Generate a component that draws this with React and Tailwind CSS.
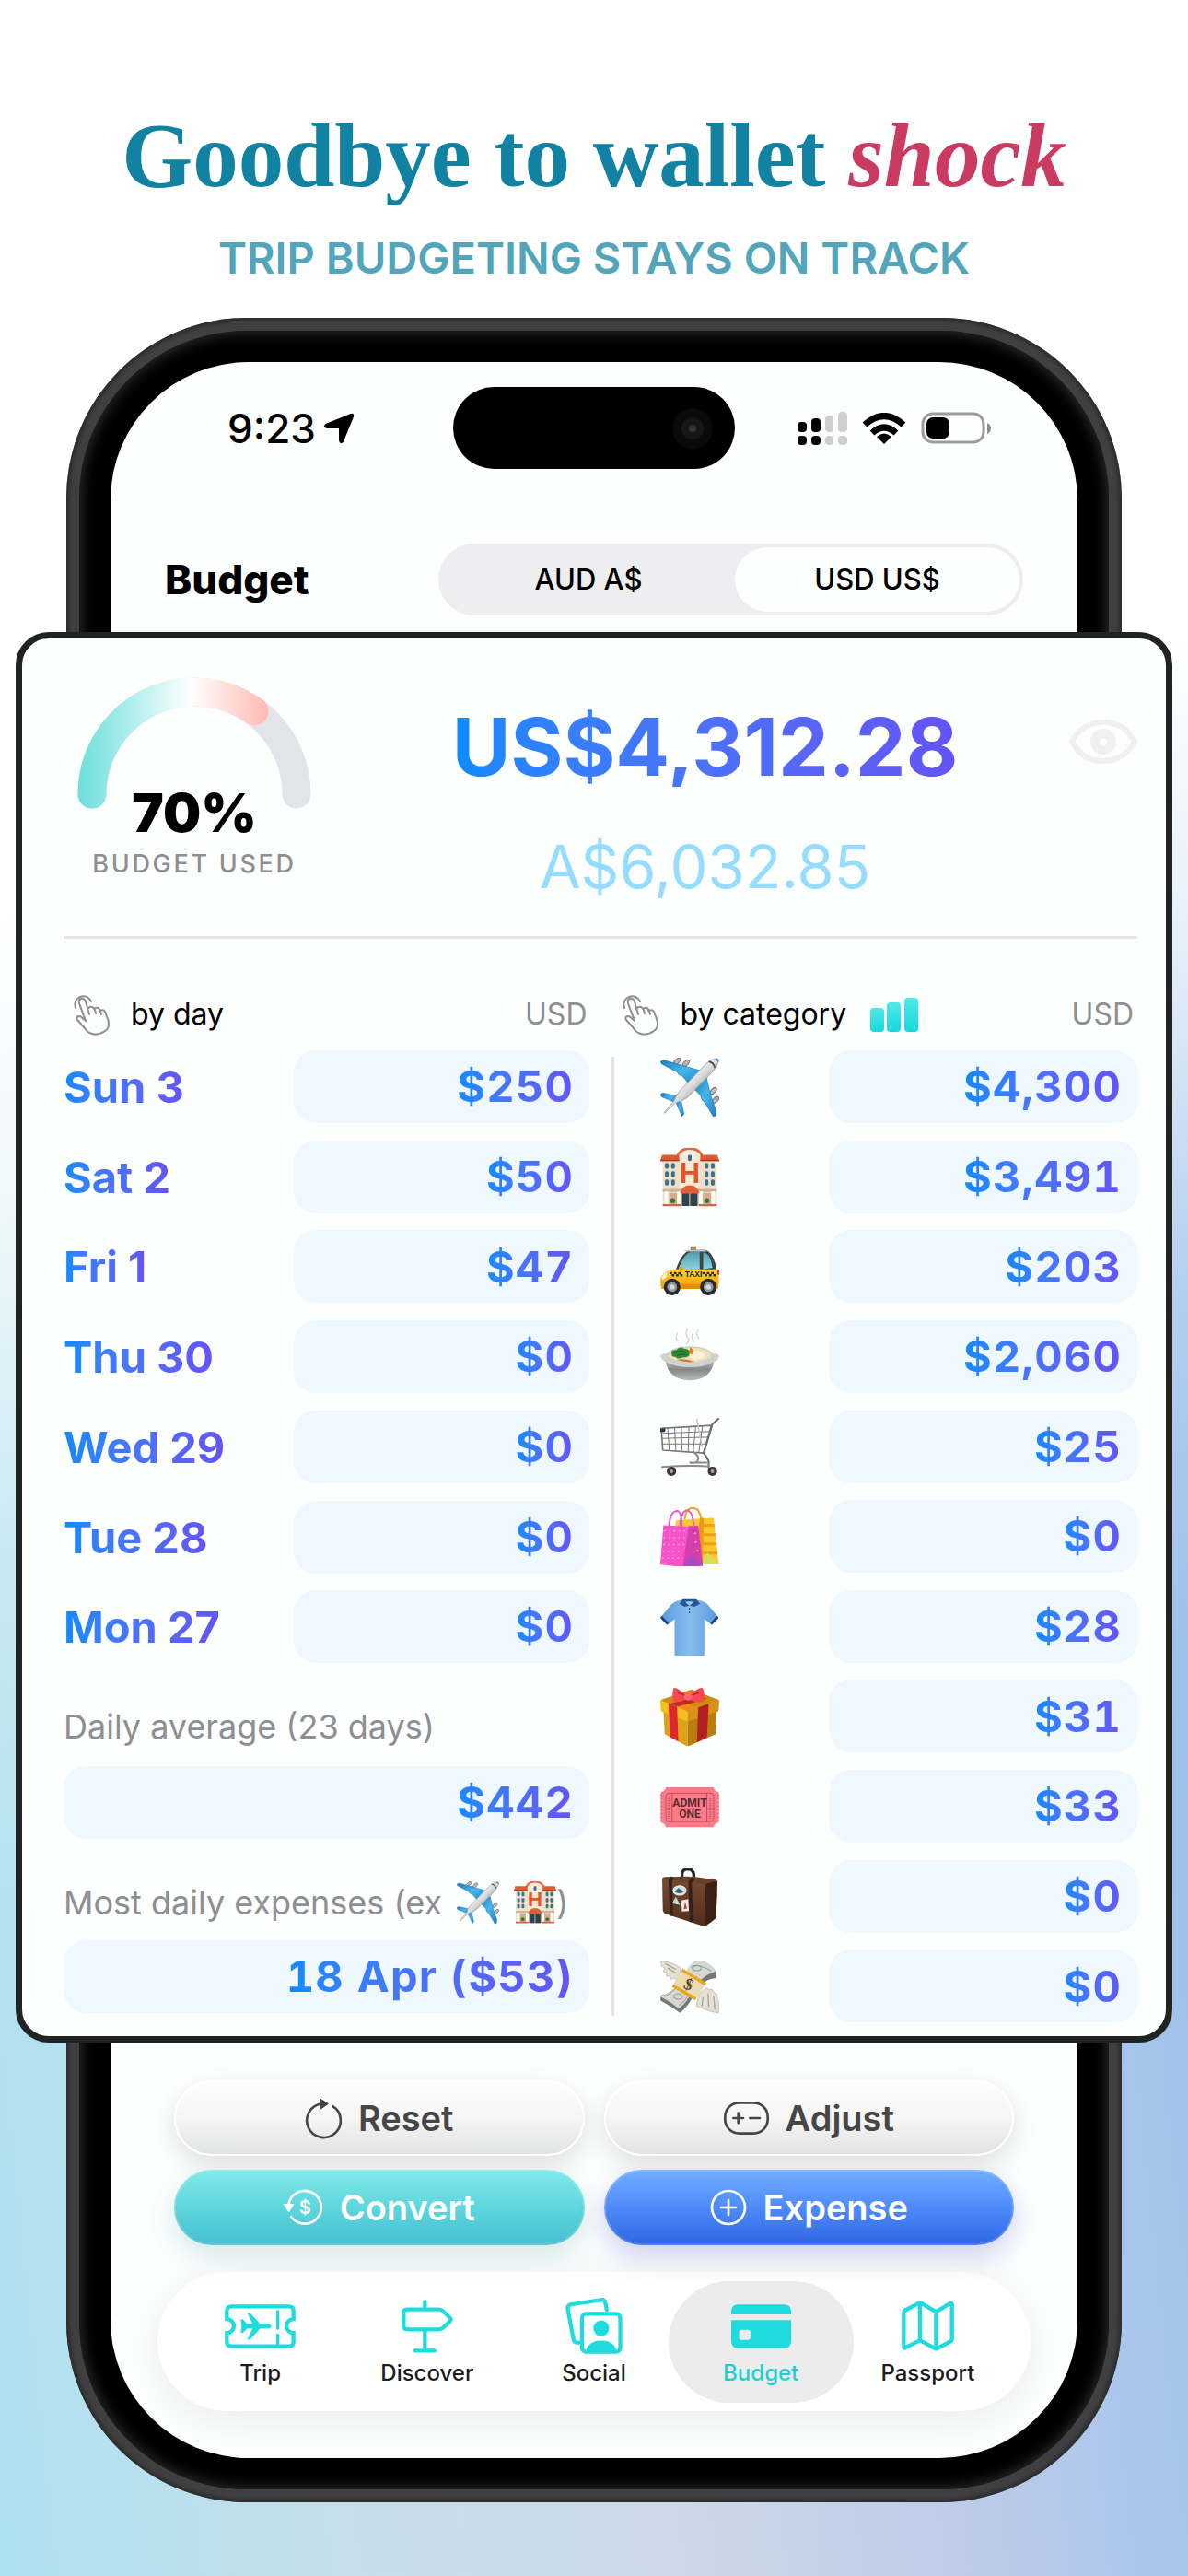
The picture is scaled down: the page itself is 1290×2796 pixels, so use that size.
import React, { useState } from 'react';

const PlaneEmoji = ({ className }) => (
  <svg viewBox="0 0 190 190" className={className} role="img" aria-label="Flights">
    <defs>
      <linearGradient id="planeBody" x1="0" y1="0" x2="1" y2="1">
        <stop offset="0.3" stopColor="#f7f7f7" />
        <stop offset="0.5" stopColor="#dcdcde" />
        <stop offset="0.7" stopColor="#8b8b8f" />
      </linearGradient>
      <linearGradient id="planeWing" x1="0" y1="0" x2="1" y2="1">
        <stop offset="0" stopColor="#1d78b5" />
        <stop offset="0.5" stopColor="#45b8f0" />
        <stop offset="1" stopColor="#1c7fc0" />
      </linearGradient>
    </defs>
    <g fill="#b9b9bb" stroke="#77777a" strokeWidth="3">
      <ellipse cx="54" cy="12" rx="13" ry="7" transform="rotate(-45 54 12)" />
      <ellipse cx="83" cy="18" rx="13" ry="7" transform="rotate(-45 83 18)" />
      <ellipse cx="171" cy="107" rx="13" ry="7" transform="rotate(-45 171 107)" />
      <ellipse cx="178" cy="136" rx="13" ry="7" transform="rotate(-45 178 136)" />
    </g>
    <g fill="url(#planeWing)" stroke="#1f6fa5" strokeWidth="2">
      <path d="M1 12 L12 8 L130 42 L92 84 L70 58 L60 55 L54 46 L4 20Z" />
      <path d="M178 188 L171 190 L143 143 L135 137 L130 122 L106 98 L148 62 L162 120 L180 172Z" />
      <path d="M1 118 L8 114 L62 125 L48 144 L4 126Z" />
      <path d="M52 148 L66 132 L76 182 L70 189Z" />
    </g>
    <path d="M12 177 L45 138 Q50 118 65 104 L145 22 Q168 0 187 3 Q190 22 168 46 L90 126 Q72 141 50 145 L14 179Z" fill="url(#planeBody)" stroke="#8d8d90" strokeWidth="2" />
    <path d="M156 13 Q172 14 176 33" fill="none" stroke="#4c4c50" strokeWidth="5" />
    <path d="M176 3 Q188 0 188 16Z" fill="#2d9fdb" />
  </svg>
);

const HotelEmoji = ({ className }) => (
  <svg viewBox="0 0 190 190" className={className} role="img" aria-label="Hotels">
    <path d="M8 30 H182 V187 H8Z" fill="#f2dfc8" />
    <path d="M62 187 V28 Q64 4 95 3 Q126 4 128 28 V187Z" fill="#f9ead6" />
    <path d="M56 24 Q66 2 95 2 Q124 2 134 24" fill="none" stroke="#e2673e" strokeWidth="8" />
    <path d="M0 42 L6 22 H61 V42Z M129 42 V22 H184 L190 42Z" fill="#dd5a32" />
    <path d="M0 38 H61 V42 H0Z M129 38 H190 V42 H129Z" fill="#a83c20" />
    <rect x="89" y="22" width="12" height="20" rx="5" fill="#356f92" />
    <g fill="#35738f">
      {[48, 75, 102].map((y) =>
        [15, 35, 143, 163].map((x) => <rect key={`${x}-${y}`} x={x} y={y} width="12" height="19" rx="5" />)
      )}
    </g>
    <text x="95" y="113" textAnchor="middle" fontFamily="Liberation Sans" fontWeight="700" fontSize="92" fill="#e2552b">H</text>
    <path d="M8 132 H182 V142 H8Z" fill="#c9b59e" />
    <g fill="#d8a98c">
      <rect x="28" y="145" width="26" height="40" />
      <rect x="137" y="145" width="26" height="40" />
    </g>
    <g fill="#fffdf8">
      <rect x="14" y="140" width="11" height="46" />
      <rect x="54" y="140" width="11" height="46" />
      <rect x="125" y="140" width="11" height="46" />
      <rect x="165" y="140" width="11" height="46" />
    </g>
    <rect x="67" y="142" width="56" height="45" fill="#b59b6a" />
    <path d="M71 146 H92 V187 H71Z M97 146 H119 V187 H97Z" fill="#284457" />
    <path d="M63 146 Q70 120 95 120 Q120 120 127 146Z" fill="#e0603a" />
    <circle cx="40" cy="170" r="8" fill="#2b7a32" />
    <circle cx="150" cy="170" r="8" fill="#2b7a32" />
    <path d="M8 181 H66 V188 H8Z M124 181 H182 V188 H124Z" fill="#cc6a48" />
  </svg>
);

const TaxiEmoji = ({ className }) => (
  <svg viewBox="0 0 190 190" className={className} role="img" aria-label="Taxis">
    <defs>
      <linearGradient id="taxiBody" x1="0" y1="0" x2="0" y2="1">
        <stop offset="0" stopColor="#ffd92e" />
        <stop offset="1" stopColor="#f09a08" />
      </linearGradient>
      <linearGradient id="taxiGlass" x1="0" y1="0" x2="0" y2="1">
        <stop offset="0" stopColor="#4f9fb0" />
        <stop offset="1" stopColor="#8fd3dd" />
      </linearGradient>
    </defs>
    <rect x="97" y="29" width="19" height="14" rx="3" fill="#b98a48" />
    <path d="M48 110 Q70 42 102 40 H142 Q170 44 182 104 V120 H40Z" fill="#3d4447" />
    <path d="M74 44 Q100 38 142 40 L150 46 H84Z" fill="#c8cccd" />
    <path d="M58 104 Q76 50 102 47 H127 V103Z" fill="url(#taxiGlass)" />
    <path d="M138 48 Q162 50 168 98 L138 103Z" fill="url(#taxiGlass)" />
    <path d="M2 128 Q18 104 44 103 H186 Q192 140 186 166 H4 Q-2 148 2 128Z" fill="url(#taxiBody)" />
    <path d="M4 128 Q18 112 22 114 Q24 128 8 138Z" fill="#f9f2e2" />
    <path d="M184 104 H190 V122 L184 118Z" fill="#e0392b" />
    <g fill="#2a2418">
      <path d="M30 112 h8 v7 h-8z M44 112 h8 v7 h-8z M58 112 h8 v7 h-8z M37 119 h8 v7 h-8z M51 119 h8 v7 h-8z M64 119 h8 v7 h-8z" />
      <path d="M136 112 h8 v7 h-8z M150 112 h8 v7 h-8z M164 112 h8 v7 h-8z M143 119 h8 v7 h-8z M157 119 h8 v7 h-8z M171 119 h8 v7 h-8z" />
    </g>
    <rect x="60" y="94" width="15" height="11" rx="4" fill="#f0a818" />
    <text x="107" y="128" textAnchor="middle" fontFamily="Liberation Sans" fontWeight="700" fontSize="25" fill="#211b10">TAXI</text>
    <path d="M66 150 H130 V166 H66Z" fill="#e78c06" />
    {[38, 155].map((x) => (
      <g key={x}>
        <circle cx={x} cy="160" r="27" fill="#26282a" />
        <circle cx={x} cy="160" r="16" fill="#92979b" />
        <circle cx={x} cy="160" r="8" fill="#d9dcde" />
      </g>
    ))}
  </svg>
);

const BowlEmoji = ({ className }) => (
  <svg viewBox="0 0 190 190" className={className} role="img" aria-label="Food">
    <defs>
      <linearGradient id="bowlSide" x1="0" y1="0" x2="0" y2="1">
        <stop offset="0" stopColor="#c4c6c4" />
        <stop offset="0.5" stopColor="#858886" />
        <stop offset="1" stopColor="#b9bbb9" />
      </linearGradient>
    </defs>
    <g fill="none" stroke="#d5d5d5" strokeWidth="4" strokeLinecap="round">
      <path d="M54 18 Q46 32 58 44" />
      <path d="M88 5 Q78 20 90 34 Q96 44 84 52" />
      <path d="M122 8 Q112 20 124 34" />
      <path d="M104 20 Q98 32 108 46" />
    </g>
    <path d="M16 100 Q22 168 95 170 Q168 168 174 100Z" fill="url(#bowlSide)" />
    <path d="M0 92 Q4 82 20 84 Q40 60 95 60 Q150 60 170 84 Q186 82 190 92 Q186 108 168 112 Q140 128 95 128 Q50 128 22 112 Q4 106 0 92Z" fill="#cfd1cf" />
    <ellipse cx="95" cy="88" rx="68" ry="23" fill="#f1dfb5" />
    <path d="M52 104 Q80 98 110 110 Q86 114 52 104Z" fill="#c9783d" />
    <path d="M90 82 Q124 66 142 86 Q150 100 112 104 Q92 100 90 82Z" fill="#f8f1dc" />
    <path d="M96 62 l10 10 l-4 16 l-10 -6z" fill="#ef7a26" />
    <path d="M36 84 Q34 70 52 72 Q62 58 78 68 Q96 68 94 82 Q96 98 74 96 Q56 104 48 94 Q36 96 36 84Z" fill="#2f8a34" />
    <path d="M44 82 Q60 72 84 80 M54 90 Q68 84 84 88" fill="none" stroke="#1d6424" strokeWidth="4" />
  </svg>
);

const CartEmoji = ({ className }) => (
  <svg viewBox="0 0 190 190" className={className} role="img" aria-label="Groceries">
    <g fill="none" stroke="#78787a" strokeWidth="4" strokeLinejoin="round" strokeLinecap="round">
      <path d="M3 34 L165 24 L140 113 L8 104Z" strokeWidth="5" />
      <path d="M4 50 L158 44 M5 66 L154 62 M6 84 L148 84" strokeWidth="3" />
      <path d="M24 34 L29 105 M46 32 L50 106 M68 31 L70 108 M92 30 L90 109 M114 28 L106 110 M136 27 L124 111" strokeWidth="3" />
      <path d="M187 3 L168 20 L140 113 Q152 128 156 140 L156 160" strokeWidth="6" stroke="#6a6a6c" />
      <path d="M108 111 Q128 126 120 138 Q116 148 96 144 H154 M156 156 Q90 152 6 158" strokeWidth="6" stroke="#8b8b8d" />
      <path d="M118 4 L124 38 L134 92" stroke="#c2c2c4" strokeWidth="4" />
    </g>
    <rect x="0" y="34" width="16" height="11" rx="2" fill="#1d3a55" />
    {[36, 168].map((x) => (
      <g key={x}>
        <circle cx={x} cy="172" r="15" fill="#3b3436" />
        <circle cx={x} cy="172" r="6" fill="#a7a1a2" />
      </g>
    ))}
  </svg>
);

const BagsEmoji = ({ className }) => (
  <svg viewBox="0 0 190 190" className={className} role="img" aria-label="Shopping">
    <path d="M78 40 Q84 0 106 2 Q128 4 132 40" fill="none" stroke="#f0a62c" strokeWidth="6" />
    <path d="M50 42 L130 36 L172 34 L188 184 L130 184 L46 100Z" fill="#fbc92c" />
    <path d="M128 34 L140 34 L136 184 L110 184Z" fill="#e39a14" />
    <path d="M130 58 H174 M132 88 H178 M134 118 H182 M136 148 H184" stroke="#f49b1b" strokeWidth="9" />
    <path d="M138 166 L152 146 L188 184 H136Z" fill="#cfe05a" />
    <path d="M10 58 L98 62 L122 60 L137 188 L72 193 L0 184Z" fill="#f653c8" />
    <path d="M92 60 L122 60 L137 188 L72 193Z" fill="#d63fae" />
    <path d="M72 193 L100 150 L137 188Z" fill="#a94bc4" />
    <g fill="#ffb4ea">
      {[76, 98, 120, 142, 164].map((y) =>
        [18, 34, 50, 66, 82].map((x) => (x < 98 - y / 8 ? <circle key={`${x}-${y}`} cx={x - y / 18} cy={y} r="2.5" /> : null))
      )}
      <circle cx="112" cy="84" r="3" />
      <circle cx="114" cy="112" r="3" />
      <circle cx="120" cy="140" r="3" />
    </g>
    <path d="M28 66 Q30 12 56 12 Q68 14 70 66 M64 62 Q66 10 88 10 Q104 14 108 58" fill="none" stroke="#e85fc3" strokeWidth="6" />
  </svg>
);

const ShirtEmoji = ({ className }) => (
  <svg viewBox="0 0 190 190" className={className} role="img" aria-label="Clothes">
    <defs>
      <linearGradient id="shirtBody" x1="0" y1="0" x2="1" y2="0">
        <stop offset="0" stopColor="#5c9ada" />
        <stop offset="0.5" stopColor="#86bdf0" />
        <stop offset="1" stopColor="#5c9ada" />
      </linearGradient>
    </defs>
    <path d="M66 8 Q44 12 34 24 L4 60 L24 86 L46 70 V184 Q46 187 50 187 H138 Q142 187 142 184 V70 L164 86 L184 60 L154 24 Q144 12 122 8Z" fill="url(#shirtBody)" />
    <path d="M4 58 L0 66 L22 88 L27 82Z M184 58 L188 66 L166 88 L161 82Z" fill="#1a4688" />
    <path d="M72 5 H116 L128 20 L110 30 L94 26 L78 30 L62 20Z" fill="#235598" />
    <path d="M80 14 Q94 10 108 14 L94 27Z" fill="#9cc8ee" />
    <circle cx="94" cy="36" r="2.5" fill="#214f8c" />
    <circle cx="94" cy="48" r="2.5" fill="#214f8c" />
  </svg>
);

const GiftEmoji = ({ className }) => (
  <svg viewBox="0 0 190 190" className={className} role="img" aria-label="Gifts">
    <path d="M0 42 L100 8 L190 42 L88 84Z" fill="#cf8c10" />
    <path d="M10 72 L88 100 V192 L14 152Z" fill="#dfa11a" />
    <path d="M88 100 L182 72 L178 152 L88 192Z" fill="#b97d0d" />
    <path d="M0 42 L88 78 V112 L2 78Z" fill="#f6bd1e" />
    <path d="M88 78 L190 42 L188 78 L88 112Z" fill="#d69313" />
    <path d="M60 64 L30 54 L120 30 L150 38Z" fill="#c02a22" />
    <path d="M26 52 L54 64 L58 176 L32 162Z" fill="#dc2a2c" />
    <path d="M122 66 L156 54 L150 164 L118 178Z" fill="#b31f22" />
    <path d="M54 64 L88 54 L122 66 L88 78Z" fill="#ee8b1a" />
    <path d="M88 30 Q46 -6 42 6 Q36 34 42 46 Q60 54 88 36Z M88 30 Q132 -6 138 6 Q146 34 140 46 Q120 56 88 36Z" fill="#f24a4e" />
    <path d="M84 30 L58 18 M94 30 L124 18" stroke="#b92429" strokeWidth="4" />
    <circle cx="90" cy="31" r="13" fill="#ff676a" />
  </svg>
);

const TicketEmoji = ({ className }) => (
  <svg viewBox="0 0 190 190" className={className} role="img" aria-label="Events">
    <path d="M18 33 H172 Q174 46 188 48 V146 Q174 148 172 161 H18 Q16 148 2 146 V48 Q16 46 18 33Z" fill="#fb7a88" />
    <path d="M2 54 V142 M188 54 V142" stroke="#fb7a88" strokeWidth="5" strokeDasharray="7 5" />
    <rect x="18" y="51" width="154" height="92" rx="12" fill="none" stroke="#c4505f" strokeWidth="3" />
    <path d="M38 51 V143 M150 51 V143" stroke="#c4505f" strokeWidth="3" />
    <path d="M28 62 V134 M161 62 V134" stroke="#c4505f" strokeWidth="7" strokeDasharray="3 4" />
    <text x="95" y="94" textAnchor="middle" fontFamily="Roboto" fontWeight="700" fontSize="36" fill="#5d2a31">ADMIT</text>
    <text x="95" y="130" textAnchor="middle" fontFamily="Roboto" fontWeight="700" fontSize="36" fill="#5d2a31">ONE</text>
  </svg>
);

const SuitcaseEmoji = ({ className }) => (
  <svg viewBox="0 0 190 190" className={className} role="img" aria-label="Luggage">
    <defs>
      <linearGradient id="caseFront" x1="0" y1="0" x2="0" y2="1">
        <stop offset="0" stopColor="#7a4b33" />
        <stop offset="1" stopColor="#4f2c1c" />
      </linearGradient>
    </defs>
    <path d="M70 36 V20 Q72 5 88 5 Q106 6 108 22 V36" fill="none" stroke="#2e2623" strokeWidth="10" />
    <path d="M6 36 Q8 30 20 30 L168 38 Q184 38 184 48 L180 160 Q178 168 142 190 Q140 192 130 186 L18 150 Q8 146 8 134Z" fill="url(#caseFront)" />
    <path d="M146 50 L184 42 L180 160 L144 190Z" fill="#3a2017" />
    <path d="M6 34 Q60 26 110 30 L184 40 L146 54 L20 40Z" fill="#68402b" />
    <g fill="none" stroke="#34201a" strokeWidth="11">
      <path d="M40 32 L32 42 L36 156" />
      <path d="M108 34 L96 48 L100 176" />
    </g>
    <ellipse cx="62" cy="74" rx="21" ry="15" fill="#cde3e6" stroke="#f4f0e4" strokeWidth="3" />
    <path d="M46 78 L58 66 L76 78 Q62 88 46 78Z" fill="#2c6683" />
    <path d="M50 94 L64 120 L38 116Z" fill="#b8dfd0" />
    <path d="M67 106 L90 102 L92 140 L70 142Z" fill="#f2ece2" />
    <path d="M76 134 L80 110 L86 132Z" fill="#ce3034" />
  </svg>
);

const MoneyEmoji = ({ className }) => (
  <svg viewBox="0 0 190 190" className={className} role="img" aria-label="Other spending">
    <g fill="#e5e1d6" stroke="#b3aea0" strokeWidth="2">
      <path d="M1 14 Q40 16 66 36 L60 66 L50 74 L44 68 L34 72 L32 62 L20 62 L20 50 L10 48 L14 36 L4 30Z" />
      <path d="M188 180 Q168 180 116 158 L124 122 Q140 104 150 100 L158 106 L166 104 L172 114 L182 120 L184 136 L190 150Z" />
    </g>
    <path d="M16 22 L50 40 M24 36 L50 52 M172 126 L176 170 M154 118 L156 162 M138 130 L134 160" stroke="#a9a493" strokeWidth="4" />
    <path d="M0 140 L2 124 Q40 120 80 60 Q98 16 120 12 Q152 12 180 46 L180 68 Q130 74 112 116 Q90 160 64 180 Q36 160 0 140Z" fill="#73787a" />
    <path d="M0 128 Q44 116 76 60 Q96 16 120 12 Q152 12 180 46 Q130 62 106 106 Q86 148 60 166 Q34 146 0 128Z" fill="#d6d8d1" />
    <path d="M100 34 Q120 18 164 46 M14 128 Q38 116 58 92 M60 156 Q78 146 92 122" fill="none" stroke="#9ba09a" strokeWidth="3" />
    <ellipse cx="118" cy="36" rx="14" ry="8" fill="none" stroke="#8ba898" strokeWidth="4" />
    <ellipse cx="58" cy="128" rx="14" ry="9" fill="none" stroke="#a3a8a2" strokeWidth="4" />
    <path d="M70 42 L146 88 L114 136 L40 92Z" fill="#eadbb2" />
    <path d="M70 42 L146 88 M40 92 L114 136" stroke="#e8a71e" strokeWidth="10" />
    <text x="92" y="106" textAnchor="middle" fontFamily="Liberation Serif" fontWeight="700" fontSize="54" fill="#5d451d" transform="rotate(25 92 88)">$</text>
  </svg>
);

const TapIcon = () => (
  <svg viewBox="0 0 41 48" className="h-12 w-[41px]" fill="none" stroke="#8e8e93" strokeWidth="2" strokeLinecap="round" strokeLinejoin="round">
    <path d="M3 17 A9 9 0 1 1 20 10" />
    <path d="M14 31 L7 12 Q6 8 9 7 Q12 6 14 10 L18 24" />
    <path d="M16 18 Q18 15 21 16 Q24 17 25 23 M23 18 Q25 16 28 17 Q30 19 31 24 M29 20 Q33 18 35 21 L38 29 Q41 38 35 42 Q28 47 21 45 Q16 44 13 39 L5 30 Q3 26 7 26 Q9 26 14 31" />
  </svg>
);

const TripIcon = () => (
  <svg viewBox="0 0 234 146" className="h-12 w-[77px]" fill="none" stroke="currentColor" strokeWidth="13">
    <path d="M7 22 Q7 7 22 7 H212 Q227 7 227 22 V49 A22 22 0 0 0 227 95 V124 Q227 139 212 139 H22 Q7 139 7 124 V95 A22 22 0 0 0 7 49Z" />
    <path d="M175 20 V84 M175 97 V134" strokeWidth="10" />
    <path d="M53 52 Q53 49 60 50 L74 65 H92 L75 30 Q76 27 84 29 L117 65 H142 Q154 67 154 72 Q154 79 142 80 H117 L84 116 Q77 118 75 115 L92 80 H74 L60 95 Q53 96 53 93 L56 73Z" fill="currentColor" stroke="none" />
  </svg>
);

const DiscoverIcon = () => (
  <svg viewBox="0 0 170 176" className="h-[58px] w-[56px]" fill="none" stroke="currentColor" strokeWidth="13" strokeLinecap="round" strokeLinejoin="round">
    <path d="M77 7 V28 M77 100 V166 M45 168 H109" />
    <path d="M20 32 H124 Q131 32 137 38 L160 60 Q166 65 160 71 L137 93 Q131 98 124 98 H20 Q7 98 7 88 V42 Q7 32 20 32Z" />
  </svg>
);

const SocialIcon = () => (
  <svg viewBox="0 0 188 186" className="h-[61px] w-[62px]" fill="none" stroke="currentColor" strokeWidth="13" strokeLinecap="round">
    <path d="M44 148 Q28 150 26 138 L7 36 Q6 25 17 22 L116 7 Q130 5 132 18 L136 40" />
    <rect x="54" y="53" width="127" height="126" rx="14" />
    <circle cx="118" cy="101" r="26" fill="currentColor" stroke="none" />
    <path d="M68 172 Q78 142 118 142 Q158 142 168 172 V180 H68Z" fill="currentColor" stroke="none" />
  </svg>
);

const BudgetIcon = () => (
  <svg viewBox="0 0 196 143" className="h-12 w-[65px]" fill="currentColor">
    <path d="M0 32 V22 Q0 0 24 0 H172 Q196 0 196 22 V32Z" />
    <path fillRule="evenodd" d="M0 51 H196 V120 Q196 143 172 143 H24 Q0 143 0 120Z M34 83 Q26 83 26 91 V108 Q26 116 34 116 H55 Q63 116 63 108 V91 Q63 83 55 83Z" />
  </svg>
);

const PassportIcon = () => (
  <svg viewBox="0 0 172 165" className="h-[55px] w-[57px]" fill="none" stroke="currentColor" strokeWidth="13" strokeLinejoin="round">
    <path d="M7 38 Q7 34 11 32 L56 8 Q60 6 64 8 L109 34 Q113 36 117 34 L159 9 Q165 7 165 13 V126 Q165 131 161 133 L117 156 Q113 159 109 156 L64 132 Q60 130 56 132 L13 154 Q7 157 7 150Z" />
    <path d="M60 8 V130 M113 36 V157" />
  </svg>
);

const ResetIcon = () => (
  <svg viewBox="0 0 120 134" className="h-[45px] w-10" fill="none" stroke="currentColor" strokeWidth="8" strokeLinecap="round">
    <path d="M91 27 A55 55 0 1 1 54 19" />
    <path d="M51 3 L76 19 L51 36Z" fill="currentColor" strokeWidth="3" strokeLinejoin="round" />
  </svg>
);

const AdjustIcon = () => (
  <svg viewBox="0 0 147 108" className="h-9 w-[49px]" fill="none" stroke="currentColor" strokeWidth="8" strokeLinecap="round">
    <rect x="4" y="4" width="139" height="100" rx="46" />
    <path d="M31 54 H63 M47 38 V70 M85 54 H117" />
  </svg>
);

const ConvertIcon = () => (
  <svg viewBox="0 0 130 120" className="h-10 w-[43px]" fill="none" stroke="currentColor" strokeWidth="8" strokeLinecap="round">
    <path d="M25 90 A54 54 0 1 0 16 52" />
    <path d="M2 50 H32 L17 73Z" fill="currentColor" strokeWidth="4" strokeLinejoin="round" />
    <text x="70" y="81" textAnchor="middle" fontFamily="Inter" fontSize="60" fill="currentColor" stroke="none">$</text>
  </svg>
);

const ExpenseIcon = () => (
  <svg viewBox="0 0 120 120" className="size-10" fill="none" stroke="currentColor" strokeWidth="8" strokeLinecap="round">
    <circle cx="60" cy="60" r="54" />
    <path d="M36 60 H84 M60 36 V84" />
  </svg>
);

const DAYS = [
  ['Sun 3', '$250'],
  ['Sat 2', '$50'],
  ['Fri 1', '$47'],
  ['Thu 30', '$0'],
  ['Wed 29', '$0'],
  ['Tue 28', '$0'],
  ['Mon 27', '$0'],
];

const CATEGORIES = [
  [PlaneEmoji, '$4,300'],
  [HotelEmoji, '$3,491'],
  [TaxiEmoji, '$203'],
  [BowlEmoji, '$2,060'],
  [CartEmoji, '$25'],
  [BagsEmoji, '$0'],
  [ShirtEmoji, '$28'],
  [GiftEmoji, '$31'],
  [TicketEmoji, '$33'],
  [SuitcaseEmoji, '$0'],
  [MoneyEmoji, '$0'],
];

const TABS = [
  ['Trip', TripIcon],
  ['Discover', DiscoverIcon],
  ['Social', SocialIcon],
  ['Budget', BudgetIcon],
  ['Passport', PassportIcon],
];

const GradientText = ({ children, className = '' }) => (
  <span className={`bg-linear-to-r from-[#0a8aff] to-[#6354f5] bg-clip-text text-transparent ${className}`}>{children}</span>
);

const Amount = ({ children }) => (
  <div className="flex h-[79px] items-center justify-end rounded-3xl bg-[#f0f8ff] pr-[17px] text-[47px] font-bold tabular-nums">
    <GradientText className="tracking-wide">{children}</GradientText>
  </div>
);

const StatusBar = () => (
  <div className="grid grid-cols-[1fr_306px_1fr] items-center pt-[27px]">
    <div className="flex items-center justify-center gap-2 pl-5">
      <span className="text-[44px] leading-none font-medium">9:23</span>
      <svg viewBox="0 0 34 34" className="size-[34px]" stroke="#000" strokeWidth="2" strokeLinejoin="round">
        <path d="M30 2 Q33 1 32 4 L21 31 Q19 34 18 30 V17 Q18 16 17 16 H4 Q0 15 3 13Z" />
      </svg>
    </div>
    <div className="flex h-[89px] items-center justify-end rounded-full bg-black pr-6">
      <div className="flex size-11 items-center justify-center rounded-full bg-[#0a0a0b]">
        <div className="flex size-6 items-center justify-center rounded-full bg-[#161618]">
          <div className="size-2 rounded-full bg-[#333338]" />
        </div>
      </div>
    </div>
    <div className="flex items-center justify-center gap-4 pr-[26px]">
      <svg viewBox="0 0 54 36" className="h-9 w-[54px]">
        <rect x="0" y="11" width="10" height="11" rx="4" />
        <rect x="15" y="7" width="10" height="15" rx="4" />
        <rect x="30" y="4" width="9" height="18" rx="4" fill="#cfcfcf" />
        <rect x="44" y="0" width="10" height="22" rx="4" fill="#cfcfcf" />
        <rect x="0" y="26" width="10" height="10" rx="4" />
        <rect x="15" y="26" width="10" height="10" rx="4" />
        <rect x="30" y="26" width="9" height="10" rx="4" fill="#cfcfcf" />
        <rect x="44" y="26" width="10" height="10" rx="4" fill="#cfcfcf" />
      </svg>
      <svg viewBox="0 0 48 34" className="h-[34px] w-12" fill="none" stroke="#000" strokeWidth="7">
        <path d="M3 13 Q24 -6 45 13" />
        <path d="M11 22 Q24 10 37 22" />
        <path d="M24 34 L16 26 Q24 19 32 26Z" fill="#000" stroke="none" />
      </svg>
      <svg viewBox="0 0 76 35" className="h-[35px] w-[76px]">
        <rect x="2" y="2" width="66" height="31" rx="11" fill="none" stroke="#9c9c9c" strokeWidth="3" />
        <rect x="6" y="6" width="25" height="23" rx="7" />
        <path d="M72 12 Q76 14 76 18 Q76 22 72 24Z" fill="#8c8c8c" />
      </svg>
    </div>
  </div>
);

const CURRENCIES = ['AUD A$', 'USD US$'];

const CurrencySwitch = () => {
  const [currency, setCurrency] = useState('USD US$');
  return (
    <div className="grid h-[78px] w-[635px] grid-cols-[318px_1fr] rounded-full bg-[#eeeef0] p-1">
      {CURRENCIES.map((c) => (
        <button
          key={c}
          type="button"
          aria-pressed={c === currency}
          onClick={() => setCurrency(c)}
          className={`rounded-full text-[31px] font-medium ${c === currency ? 'bg-[#fdfefe]' : ''}`}
        >
          {c}
        </button>
      ))}
    </div>
  );
};

const Gauge = () => (
  <div className="flex w-[301px] flex-col items-center pr-[17px]">
    <svg viewBox="0 0 254 143" className="h-[143px] w-[254px]" fill="none" strokeWidth="31" strokeLinecap="round">
      <defs>
        <linearGradient id="gauge" gradientUnits="userSpaceOnUse" x1="0" y1="0" x2="206" y2="0">
          <stop offset="0" stopColor="#6adfdb" />
          <stop offset="0.6" stopColor="#ffffff" />
          <stop offset="1" stopColor="#ffbab2" />
        </linearGradient>
      </defs>
      <path d="M16 127 A111 111 0 0 1 238 127" stroke="#e3e4e9" />
      <path d="M16 127 A111 111 0 0 1 192 37" stroke="url(#gauge)" />
    </svg>
    <span className="-mt-6 text-[58px] leading-[56px] font-black">70%</span>
    <span className="mt-[14px] text-[27px] leading-7 font-medium tracking-widest text-[#8e8e93]">BUDGET USED</span>
  </div>
);

const BudgetCard = () => (
  <section className="-mx-[103px] mt-[18px] rounded-[36px] border-[7px] border-[#212222] bg-[#fdfefe] pr-[31px] pl-[45px]">
    <div className="flex h-[323px] items-start pt-[42px]">
      <Gauge />
      <div className="flex flex-1 flex-col items-center pt-8">
        <GradientText className="text-[87px] leading-none font-bold">US$4,312.28</GradientText>
        <span className="mt-[54px] text-[65px] leading-none text-[#96dcff]">A$6,032.85</span>
      </div>
      <button type="button" aria-label="Hide amounts" className="mt-[46px] text-[#f0f0f0]">
        <svg viewBox="0 0 74 48" className="h-12 w-[74px]" fill="none" stroke="currentColor" strokeWidth="6">
          <path d="M3 24 Q14 3 37 3 Q60 3 71 24 Q60 45 37 45 Q14 45 3 24Z" />
          <circle cx="37" cy="24" r="9" strokeWidth="10" />
        </svg>
      </button>
    </div>
    <hr className="border-t-[3px] border-[#e4e4ea]" />

    <div className="mt-[58px] flex h-12 items-center text-[32px]">
      <div className="flex flex-[571_1_0%] items-center pr-1 pl-[10px]">
        <TapIcon />
        <h3 className="ml-[22px]">by day</h3>
        <span className="ml-auto text-[#8e8e93]">USD</span>
      </div>
      <div className="ml-[27px] flex flex-[568_1_0%] items-center pr-1 pl-[7px]">
        <TapIcon />
        <h3 className="ml-[22px]">by category</h3>
        <svg viewBox="0 0 52 37" className="ml-[26px] h-[37px] w-[52px]">
          <defs>
            <linearGradient id="bars" x1="0" y1="0" x2="0" y2="1">
              <stop offset="0" stopColor="#4ce9ea" />
              <stop offset="1" stopColor="#18d8da" />
            </linearGradient>
          </defs>
          <g fill="url(#bars)">
            <rect x="0" y="11" width="15" height="26" rx="4" />
            <rect x="18" y="5" width="15" height="32" rx="4" />
            <rect x="37" y="0" width="15" height="37" rx="4" />
          </g>
        </svg>
        <span className="ml-auto text-[#8e8e93]">USD</span>
      </div>
    </div>

    <div className="mt-[15px] flex">
      <div className="flex-[571_1_0%]">
        <table className="h-[684px] w-full">
          <tbody>
            {DAYS.map(([day, amount]) => (
              <tr key={day}>
                <th className="p-0 text-left align-top text-[47px] leading-[79px] font-bold">
                  <GradientText>{day}</GradientText>
                </th>
                <td className="w-[321px] p-0 align-top">
                  <Amount>{amount}</Amount>
                </td>
              </tr>
            ))}
          </tbody>
        </table>
        <h4 className="mt-7 mb-[21px] text-4xl leading-[44px] text-[#8e8e93]">Daily average (23 days)</h4>
        <Amount>$442</Amount>
        <h4 className="mt-[46px] mb-[18px] flex items-center text-4xl leading-[44px] whitespace-pre text-[#8e8e93]">
          Most daily expenses (ex <PlaneEmoji className="ml-1.5 size-[46px]" />
          <HotelEmoji className="ml-4 size-[46px]" />)
        </h4>
        <Amount>18 Apr ($53)</Amount>
      </div>
      <div className="mt-[7px] mb-[22px] ml-6 w-[3px] bg-[#e4e4e6]" />
      <div className="flex-[568_1_0%]">
        <table className="-mb-1 h-[1074px] w-full">
          <tbody>
            {CATEGORIES.map(([Emoji, amount], i) => (
              <tr key={i}>
                <th className="p-0 pt-2 pl-[50px] align-top">
                  <Emoji className="size-16" />
                </th>
                <td className="w-[335px] p-0 align-top">
                  <Amount>{amount}</Amount>
                </td>
              </tr>
            ))}
          </tbody>
        </table>
      </div>
    </div>
  </section>
);

const buttonBase = 'flex h-[82px] items-center justify-center gap-[18px] rounded-full text-[38px] font-semibold';
const plainButton = 'border-2 border-white bg-linear-to-b from-[#fdfdfd] via-[#f5f5f5] to-[#e2e3e3] text-[#464646] shadow-[0_10px_30px_rgba(0,0,0,0.12)]';

const Actions = () => (
  <div className="mt-[41px] grid grid-cols-2 gap-x-[21px] gap-y-[15px] px-[69px]">
    <button type="button" className={`${buttonBase} ${plainButton}`}>
      <ResetIcon />
      Reset
    </button>
    <button type="button" className={`${buttonBase} ${plainButton}`}>
      <AdjustIcon />
      Adjust
    </button>
    <button
      type="button"
      className={`${buttonBase} border-2 border-white/15 bg-linear-to-b from-[#82e9e9] via-[#5dd6dd] to-[#45bfd0] bg-origin-border text-white shadow-[0_12px_30px_rgba(60,150,150,0.2)]`}
    >
      <ConvertIcon />
      Convert
    </button>
    <button
      type="button"
      className={`${buttonBase} border-2 border-white/15 bg-linear-to-b from-[#72adff] via-[#4e8bf9] to-[#2f66e3] bg-origin-border text-white shadow-[0_12px_30px_rgba(60,80,200,0.26)]`}
    >
      <ExpenseIcon />
      Expense
    </button>
  </div>
);

const TabBar = () => (
  <nav className="mx-[51px] mt-[29px] grid h-[151px] grid-cols-5 items-center rounded-full bg-white px-[21px] shadow-[0_10px_50px_rgba(0,0,0,0.08)]">
    {TABS.map(([label, Icon]) => {
      const active = label === 'Budget';
      return (
        <a
          key={label}
          href={`#${label.toLowerCase()}`}
          className={`-mx-[10px] flex h-[132px] flex-col items-center rounded-full pt-[18px] text-2xl font-medium ${active ? 'bg-[#ececed] text-[#1fd0d3]' : 'text-[#1c1c1e]'}`}
        >
          <span className="flex h-[62px] items-center text-[#1edbde]">
            <Icon />
          </span>
          <span className="mt-1 leading-8">{label}</span>
        </a>
      );
    })}
  </nav>
);

const App = () => (
  <div className="min-h-screen bg-[linear-gradient(167deg,#fff_0%,#fff_32%,rgba(255,255,255,0.75)_43%,rgba(255,255,255,0.25)_55%,transparent_68%),linear-gradient(84deg,#aee2f1_0%,#c5deea_24%,#cdd8e8_46%,#bfcbe8_66%,#a8c6ec_80%,#8cb6e7_100%)] pt-[120px] pb-20 font-['Inter',sans-serif] text-black">
    <header className="text-center">
      <h1 className="font-['Liberation_Serif',serif] text-[99px] leading-[98px] font-bold text-[#1182a1]">
        Goodbye to wallet <em className="text-[#c93b60]">shock</em>
      </h1>
      <p className="mt-[38px] text-[47px] leading-[48px] font-semibold text-[#53a5bb]">TRIP BUDGETING STAYS ON TRACK</p>
    </header>

    {/* Phone */}
    <main className="mx-[72px] mt-[41px] rounded-[196px] bg-[#404042] p-[14px] shadow-[inset_0_0_4px_3px_#2b2b2c]">
      <div className="rounded-[182px] bg-black p-[34px] shadow-[inset_0_0_14px_3px_#2a2a2a]">
        <div className="rounded-[150px] bg-[#fdfefe] pb-[51px]">
          <StatusBar />
          <div className="mt-[81px] flex items-center justify-between px-[59px]">
            <h2 className="text-[44px] font-extrabold">Budget</h2>
            <CurrencySwitch />
          </div>
          <BudgetCard />
          <Actions />
          <TabBar />
        </div>
      </div>
    </main>
  </div>
);

export default App;
